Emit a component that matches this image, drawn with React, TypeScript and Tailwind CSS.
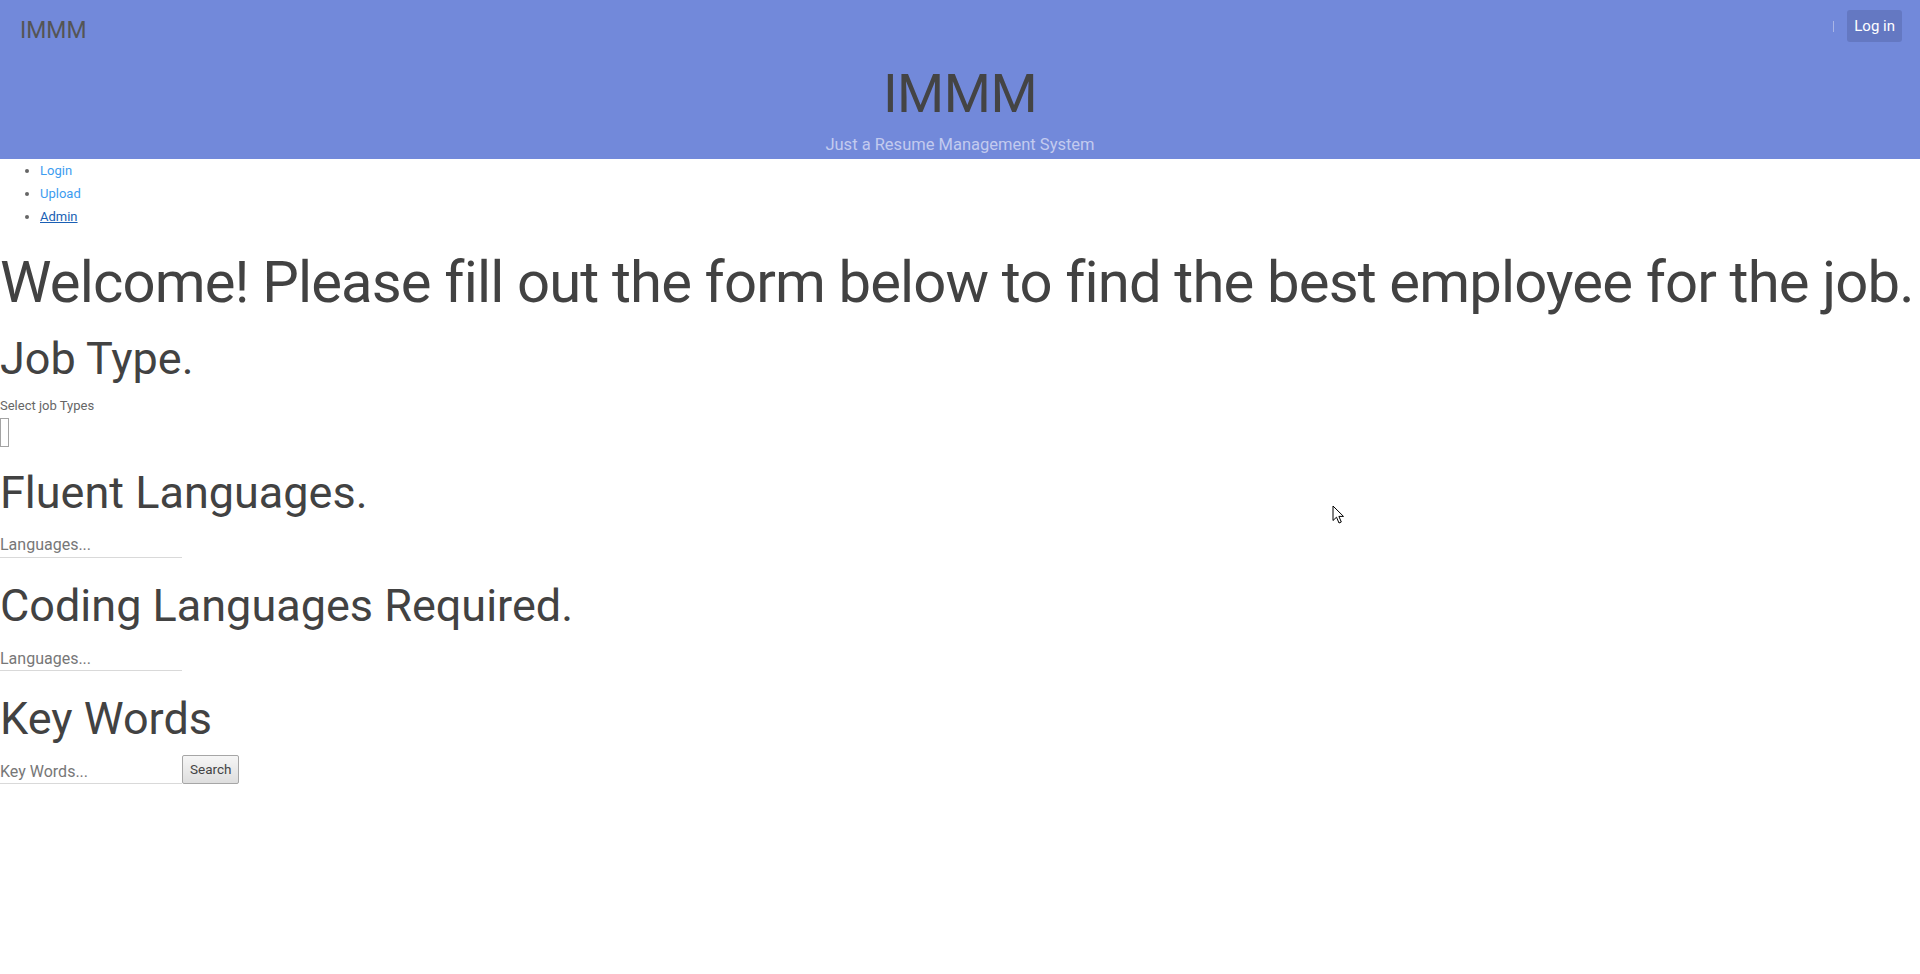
import React from "react";

function Cursor() {
  return (
    <svg width="13" height="20" viewBox="0 0 13 20" className="absolute left-[1332px] top-[505px]">
      <path d="M1 1V15.5L4.5 12.2L7 18L9.3 17L6.9 11.4H11.5Z" fill="white" stroke="black" strokeWidth="1" strokeLinejoin="round" />
    </svg>
  );
}

function Field({ placeholder }: { placeholder: string }) {
  return (
    <input
      placeholder={placeholder}
      className="w-[182px] h-[24px] border-b border-[#d9d9d9] bg-transparent text-[16px] text-[#444] placeholder:text-[#777] outline-none"
    />
  );
}

export default function App() {
  return (
    <div className="relative min-h-[974px] overflow-hidden bg-white text-[#424242] font-['Roboto','Liberation_Sans',sans-serif]">
      {/* header */}
      <header className="h-[159px] bg-[#7289da] flex flex-col">
        <div className="flex items-start justify-between pl-5 pr-[18px] pt-[16px] h-[64px]">
          <span className="text-[23px] leading-[30px] text-[#555]">IMMM</span>
          <div className="flex items-center gap-[13px] -mt-[6px]">
            <span className="w-px h-[11px] bg-[#a9b5e6]" />
            <button className="h-[32px] px-[7px] rounded-[3px] bg-[#6478c2] text-white text-[15px]">Log in</button>
          </div>
        </div>
        <h1 className="text-center text-[54px] leading-[1.1] tracking-[-0.5px] text-[#444]">IMMM</h1>
        <p className="mt-[8px] text-center text-[16.5px] leading-[27px] text-[#c3cbef]">Just a Resume Management System</p>
      </header>

      {/* nav */}
      <ul className="list-disc pl-10 text-[13px] leading-[23px] marker:text-[#666]">
        <li><a className="text-[#3d9cf0]">Login</a></li>
        <li><a className="text-[#3d9cf0]">Upload</a></li>
        <li><a className="text-[#1a5fb4] underline">Admin</a></li>
      </ul>

      <main className="flex flex-col items-start">
        <h2 className="mt-[21px] text-[58px] leading-[66px] tracking-[-0.85px] whitespace-nowrap">Welcome! Please fill out the form below to find the best employee for the job.</h2>

        <h3 className="mt-[18px] text-[45px] leading-[51px]">Job Type.</h3>
        <label className="mt-[12px] text-[13px] leading-[20px] text-[#666]">Select job Types</label>
        <div className="mt-[2px] w-[9px] h-[29px] border border-[#a3a3a3] bg-white" />

        <h3 className="mt-[20px] text-[45px] leading-[51px]">Fluent Languages.</h3>
        <div className="mt-[15px]"><Field placeholder="Languages..." /></div>

        <h3 className="mt-[22px] text-[45px] leading-[51px]">Coding Languages Required.</h3>
        <div className="mt-[16px]"><Field placeholder="Languages..." /></div>

        <h3 className="mt-[22px] text-[45px] leading-[51px]">Key Words</h3>
        <div className="mt-[11px] flex items-end">
          <Field placeholder="Key Words..." />
          <button className="h-[29px] px-[7px] border border-[#a6a6a6] rounded-[2px] bg-gradient-to-b from-[#f6f6f6] to-[#dedede] text-[13.5px] text-[#444]">Search</button>
        </div>
      </main>

      <Cursor />
    </div>
  );
}
